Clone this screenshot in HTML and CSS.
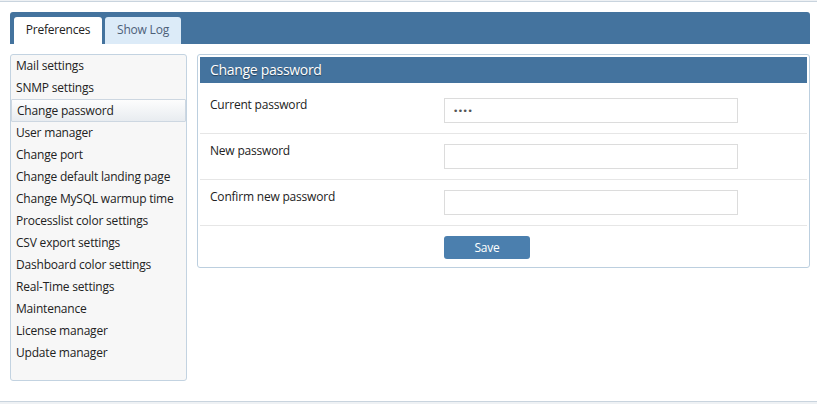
FILE: index.html
```html
<!DOCTYPE html>
<html>
<head>
<meta charset="utf-8">
<link rel="stylesheet" href="styles.css">
</head>
<body>
<div class="page">
  <div class="tabbar">
    <div class="tab tab-active">Preferences</div>
    <div class="tab tab-log">Show Log</div>
  </div>
  <div class="content">
    <ul class="sidebar">
      <li class="item">Mail settings</li>
      <li class="item">SNMP settings</li>
      <li class="item item-active">Change password</li>
      <li class="item">User manager</li>
      <li class="item">Change port</li>
      <li class="item">Change default landing page</li>
      <li class="item">Change MySQL warmup time</li>
      <li class="item">Processlist color settings</li>
      <li class="item">CSV export settings</li>
      <li class="item">Dashboard color settings</li>
      <li class="item">Real-Time settings</li>
      <li class="item">Maintenance</li>
      <li class="item">License manager</li>
      <li class="item">Update manager</li>
    </ul>
    <div class="panel">
      <div class="panel-head">Change password</div>
      <div class="form">
        <div class="row">
          <div class="label">Current password</div>
          <input class="field" type="password" value="abcd">
        </div>
        <div class="row">
          <div class="label">New password</div>
          <input class="field" type="password" value="">
        </div>
        <div class="row">
          <div class="label">Confirm new password</div>
          <input class="field" type="password" value="">
        </div>
        <div class="row row-last">
          <div class="label"></div>
          <button class="save">Save</button>
        </div>
      </div>
    </div>
  </div>
</div>
</body>
</html>
```
FILE: styles.css
```css
html, body {
  margin: 0;
  padding: 0;
  background: #eef1f4;
}
body {
  font-family: "Open Sans", "Noto Sans", sans-serif;
  font-size: 12px;
  letter-spacing: -0.2px;
  color: #222;
}
.page {
  margin-top: 1px;
  height: 401px;
  background: #fff;
  border-top: 1px solid #c9d4de;
  border-bottom: 1px solid #c9d4de;
  box-sizing: border-box;
  padding: 10px 7px 0 10px;
}
.tabbar {
  height: 32px;
  background: #44739e;
  border-radius: 3px 3px 0 0;
  display: flex;
  align-items: flex-end;
  padding-left: 4px;
  gap: 3px;
  box-sizing: border-box;
}
.tab {
  height: 27px;
  line-height: 26px;
  border-radius: 3px 3px 0 0;
  text-align: center;
  box-sizing: border-box;
}
.tab-active {
  width: 88px;
  background: #fff;
  color: #222;
}
.tab-log {
  width: 76px;
  background: #dcebf8;
  color: #4c6078;
}
.content {
  display: flex;
  align-items: flex-start;
  gap: 10px;
  margin-top: 10px;
}
.sidebar {
  list-style: none;
  margin: 0;
  width: 177px;
  height: 327px;
  box-sizing: border-box;
  padding: 0;
  background: #f7f7f7;
  border: 1px solid #c3d3e1;
  border-radius: 3px;
  flex-shrink: 0;
}
.item {
  height: 22px;
  line-height: 22px;
  padding-left: 5px;
  white-space: nowrap;
}
.item-active {
  background: linear-gradient(#fdfdfd, #e8ecf0);
  border: 1px solid #cdd7e1;
  border-radius: 1px;
  height: 23px;
  line-height: 21px;
  box-sizing: border-box;
  padding-left: 5px;
}
.panel {
  flex: 1;
  border: 1px solid #bccfdf;
  border-radius: 3px;
  padding: 2px;
  background: #fff;
}
.panel-head {
  height: 26px;
  line-height: 26px;
  background: #44739e;
  color: #fff;
  font-size: 14px;
  letter-spacing: -0.3px;
  padding-left: 10px;
  text-shadow: 0 1px 1px rgba(0,0,0,0.45);
}
.form {
  padding-top: 5px;
}
.row {
  display: flex;
  align-items: flex-start;
  padding: 10px 0 10px 10px;
  border-bottom: 1px solid #e6e6e6;
}
.row-last {
  border-bottom: none;
  padding-bottom: 6px;
}
.label {
  width: 234px;
  line-height: 14px;
  flex-shrink: 0;
}
.field {
  width: 294px;
  height: 25px;
  box-sizing: border-box;
  border: 1px solid #dcdcdc;
  margin: 0;
  padding: 0 8px;
  font-family: "DejaVu Sans", sans-serif;
  font-size: 9px;
  color: #555;
  letter-spacing: -0.5px;
  outline: none;
}
.save {
  width: 86px;
  height: 23px;
  margin: 0;
  border: none;
  border-radius: 3px;
  background: #4b7fae;
  color: #fff;
  font-family: "Open Sans", "Noto Sans", sans-serif;
  font-size: 12px;
  letter-spacing: -0.2px;
  padding: 0;
  cursor: pointer;
}
```
